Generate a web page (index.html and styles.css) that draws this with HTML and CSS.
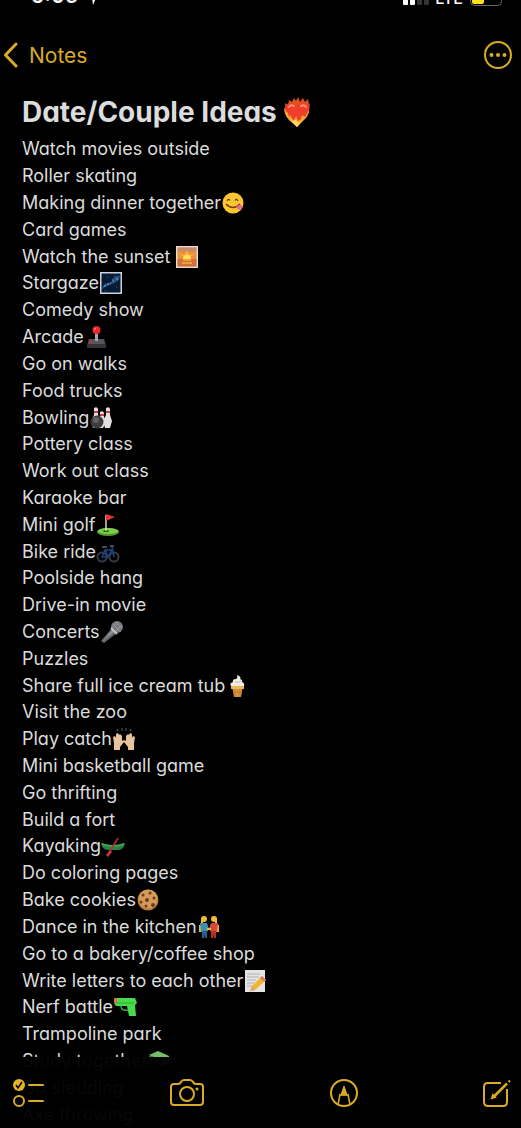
FILE: index.html
```
<!DOCTYPE html>
<html lang="en">
<head>
  <meta charset="UTF-8" />
  <meta name="viewport" content="width=device-width, initial-scale=1.0" />
  <title>Date/Couple Ideas</title>
  <link rel="stylesheet" href="styles.css">
</head>
<body>
  <div class="status-bar">
    <span class="status-time">5:06</span>
    <svg class="location" viewBox="0 0 14 14"><path d="M13 0 7 14 6 7 0 6z" fill="#fff"/></svg>
    <svg class="signal" viewBox="0 0 26 16">
      <rect x="0" y="9" width="5" height="7" rx="1" fill="#fff"/>
      <rect x="7" y="6" width="5" height="10" rx="1" fill="#fff"/>
      <rect x="14" y="3" width="5" height="13" rx="1" fill="#333"/>
      <rect x="21" y="0" width="5" height="16" rx="1" fill="#333"/>
    </svg>
    <span class="status-net">LTE</span>
    <svg class="battery" viewBox="0 0 32 16">
      <rect x="0.5" y="0.5" width="31" height="15" rx="4" fill="none" stroke="#666"/>
      <rect x="2" y="2" width="12" height="12" rx="2" fill="#ffe018"/>
    </svg>
  </div>

  <header class="nav">
    <a href="#" class="back">
      <svg viewBox="0 0 16 26"><path d="M13 2 2.5 13 13 24" fill="none" stroke="#d9ab27" stroke-width="3" stroke-linecap="round" stroke-linejoin="round"/></svg>
      Notes
    </a>
    <button class="icon-btn" aria-label="More">
      <svg viewBox="0 0 28 28"><circle cx="14" cy="14" r="13" fill="none" stroke="#d9ab27" stroke-width="2"/><g fill="#d9ab27"><circle cx="7.5" cy="14" r="2"/><circle cx="14" cy="14" r="2"/><circle cx="20.5" cy="14" r="2"/></g></svg>
    </button>
  </header>

  <main class="note">
    <h1>Date/Couple Ideas<svg class="heart" viewBox="0 0 28 30" role="img" aria-label="heart on fire">
      <path d="M3 13 2 6 5 8 6 3 9 5 11 1 13 4 15 0 17 5 20 1 22 5 25 2 26 8 27 6 26 15 20 23 14 30 7 23 3 18z" fill="#e0531f"/>
      <path d="M14 28C7 22 1 17 2 11C3 5 11 4 14 10C17 4 26 5 26 11C26 18 20 22 14 28z" fill="#f03e2a"/>
      <path d="M6 10Q8 7 11 9M18 9Q21 7 23 10" stroke="#ff9479" stroke-width="2" fill="none" stroke-linecap="round"/>
      <path d="M1 10Q2 14 5 16L6 20 8 18Q8 22 11 23L13 19 15 24 18 22 19 18 22 20 26 13Q26 19 20 24L14 30 6 23Q1 18 1 10z" fill="#f9a92f"/>
      <path d="M7 22 10 24 13 23 15 26 18 24 14 30z" fill="#ffdc62"/>
    </svg></h1>
    <ul class="ideas">
      <li>Watch movies outside</li>
      <li>Roller skating</li>
      <li>Making dinner together<svg class="emoji" viewBox="0 0 24 24" role="img" aria-label="yummy face">
        <circle cx="12" cy="12" r="10.5" fill="#fcc631"/><path d="M6 10Q7.5 7 9 9.5M14 9.5Q15.500 7 17 10" fill="none" stroke="#664012" stroke-width="1.2"/><path d="M5 13Q12 20 19 13" fill="none" stroke="#713712" stroke-width="1.5"/><path d="M15 16Q19 12 21 15Q22 19 18 19z" fill="#ed668b"/></svg></li>
      <li>Card games</li>
      <li>Watch the sunset <svg class="emoji" viewBox="0 0 24 24" role="img" aria-label="sunset">
        <path d="M1 1h22v22H1z" fill="#e4ddd8"/><path d="M2.5 2.5h19v19h-19z" fill="#ed9038"/><path d="M2.5 2.5h19v4h-19z" fill="#cb8c6d"/><path d="M12 14 3 8 9 10 12 6 15 10 21 8z" fill="#f9b43e"/><path d="M8 14Q8 10 12 10T16 14z" fill="#ffe35b"/><path d="M2.5 14h19v7.5h-19z" fill="#d0703a"/><path d="M8 15h8M7 18h10" stroke="#f8af41" stroke-width="1.5"/></svg></li>
      <li>Stargaze<svg class="emoji" viewBox="0 0 24 24" role="img" aria-label="milky way">
        <path d="M1 1h22v22H1z" fill="#cbd3dc"/><path d="M2.5 2.5h19v19h-19z" fill="#071b37"/><path d="M3 17Q5 12 9 12T14 8T21 5L20 9Q15 13 11 14T3 18z" fill="#23507f"/><path d="M5 15h2M8 13h2M11 12h1M14 10h1M17 8h2M13 9h1" stroke="#7aa8d0"/><path d="M8 6h1M17 16h1M6 20h1M15 4h1" stroke="#3d6795"/></svg></li>
      <li>Comedy show</li>
      <li>Arcade<svg class="emoji" viewBox="0 0 24 24" role="img" aria-label="joystick">
        <path d="M5 14h15l2 6v3H3v-3z" fill="#33343a"/><path d="M5 14h15l1 5H4z" fill="#55565c"/><path d="M11 7h3v9h-3z" fill="#a1a1a5"/><circle cx="12.5" cy="5" r="4" fill="#e6282f"/><circle cx="11" cy="4" r="1" fill="#ff8080"/><ellipse cx="7" cy="17" rx="2" ry="1" fill="#d02630"/></svg></li>
      <li>Go on walks</li>
      <li>Food trucks</li>
      <li>Bowling<svg class="emoji" viewBox="0 0 24 24" role="img" aria-label="bowling">
        <g fill="#e2dfde"><path d="M5 2Q8 0 9 3V9L11 15 9 22H4L2 15 5 9z"/><path d="M11 6Q14 4 15 7V11L17 16 14 22H10L9 16 11 11z"/><path d="M17 2Q20 0 21 3V9L23 15 21 22H16L14 15 17 9z"/></g><path d="M5 6h4M11 9h4M17 6h4" stroke="#c53d45" stroke-width="2"/><circle cx="8" cy="16" r="6.5" fill="#3c3c3e"/><circle cx="7" cy="14" r="3" fill="#626264"/></svg></li>
      <li>Pottery class</li>
      <li>Work out class</li>
      <li>Karaoke bar</li>
      <li>Mini golf<svg class="emoji" viewBox="0 0 24 24" role="img" aria-label="golf flag">
        <ellipse cx="12" cy="19" rx="11" ry="4" fill="#4f9928"/><ellipse cx="12" cy="18" rx="10.5" ry="3" fill="#7dcc48"/><ellipse cx="10" cy="18" rx="3" ry="1" fill="#274f18"/><path d="M10 2v16" stroke="#d7d7c8" stroke-width="1.5"/><path d="M10 1 19 4 10 8z" fill="#e6352f"/></svg></li>
      <li>Bike ride<svg class="emoji" viewBox="0 0 24 24" role="img" aria-label="bicycle">
        <g fill="none" stroke="#343b44" stroke-width="2"><circle cx="6" cy="17" r="4.5"/><circle cx="18" cy="17" r="4.5"/></g><path d="M6 17 9 10H16L12 17H6M9 9 12 17M16 7 18 17" fill="none" stroke="#1c4584" stroke-width="1.5"/><path d="M6 7h5M14 6h4" stroke="#4a4a50" stroke-width="2"/></svg></li>
      <li>Poolside hang</li>
      <li>Drive-in movie</li>
      <li>Concerts<svg class="emoji" viewBox="0 0 24 24" role="img" aria-label="microphone">
        <path d="M12 8 17 13 4 23 1 21z" fill="#65666a"/><path d="M12 10 14 12 3 21z" fill="#929397"/><circle cx="17" cy="7" r="6" fill="#77787b"/><path d="M13 4 20 11M15 2 22 8M12 8 18 2M15 12 22 5" stroke="#98989a"/><path d="M11 8 17 14" stroke="#c3c3c5" stroke-width="2"/></svg></li>
      <li>Puzzles</li>
      <li>Share full ice cream tub<svg class="emoji" viewBox="0 0 24 24" role="img" aria-label="soft ice cream">
        <path d="M7 12h11l-2 11H9z" fill="#d7963e"/><path d="M6 11h13v4H6z" fill="#edb65d"/><path d="M10 15v8M15 15v8M8 18h9" stroke="#bd7c32"/><path d="M12 1Q17 3 15 5Q18 6 17 8Q20 9 19 12H6Q4 9 8 8Q7 5 11 5Q13 4 12 1z" fill="#f4ece2"/><path d="M10 8Q14 9 16 7" stroke="#c9b8a8" fill="none"/></svg></li>
      <li>Visit the zoo</li>
      <li>Play catch<svg class="emoji" viewBox="0 0 24 24" role="img" aria-label="raising hands">
        <g fill="#e9c39b"><path d="M2 23V16L1 10 3 9 4 11V7L6 6 7 8 8 7 10 9V14L12 13 12 15 8 20V23z"/><path d="M22 23V16L23 10 21 9 20 11V7L18 6 17 8 16 7 14 9V14L12 13 12 15 16 20V23z"/></g><path d="M6 4 5 2M10 4V1M14 4V1M18 4 19 2" stroke="#56697a"/></svg></li>
      <li>Mini basketball game</li>
      <li>Go thrifting</li>
      <li>Build a fort</li>
      <li>Kayaking<svg class="emoji" viewBox="0 0 24 24" role="img" aria-label="canoe">
        <path d="M0 9Q12 13 24 9Q23 16 17 16H7Q1 16 0 9z" fill="#278245"/><path d="M1 10Q12 14 23 10" fill="none" stroke="#4aa95f" stroke-width="1.5"/><path d="M17 4 8 19" stroke="#b62f34" stroke-width="1.5"/><path d="M9 16 5 21 7 23 11 18z" fill="#cf3339"/></svg></li>
      <li>Do coloring pages</li>
      <li>Bake cookies<svg class="emoji" viewBox="0 0 24 24" role="img" aria-label="cookie">
        <circle cx="12" cy="12" r="10.5" fill="#b87b3d"/><circle cx="12" cy="11" r="9.5" fill="#d49a59"/><g fill="#6a3d1d"><circle cx="7" cy="7" r="1.5"/><circle cx="14" cy="5" r="1.5"/><circle cx="18" cy="10" r="1.5"/><circle cx="11" cy="12" r="2"/><circle cx="5" cy="14" r="1.5"/><circle cx="10" cy="18" r="1.5"/><circle cx="17" cy="17" r="2"/></g></svg></li>
      <li>Dance in the kitchen<svg class="emoji" viewBox="0 0 24 24" role="img" aria-label="two women holding hands">
        <g fill="#eebc35"><circle cx="7" cy="4" r="3"/><circle cx="17" cy="4" r="3"/><path d="M4 3h2v5H4zM18 3h2v5h-2z"/><path d="M2 10h2v7H2zM20 10h2v7h-2z"/></g><path d="M3 8H10L12 14 10 17H4z" fill="#3c8fae"/><path d="M14 8H21L20 17H14L12 14z" fill="#d9463a"/><path d="M5 16h5v7H8l-1-4v4H5z" fill="#27608f"/><path d="M14 16h5v7h-2v-4l-1 4h-2z" fill="#b8322c"/><path d="M10 14h4" stroke="#eebc35" stroke-width="2"/></svg></li>
      <li>Go to a bakery/coffee shop</li>
      <li>Write letters to each other<svg class="emoji" viewBox="0 0 24 24" role="img" aria-label="memo">
        <path d="M2 1h20v22H2z" fill="#e4e4e2"/><path d="M4 5h13M4 8h12M4 11h9M4 14h7M4 17h5" stroke="#b0b2b5"/><path d="M19 7 23 11 12 21 7 22 9 17z" fill="#f2b52d"/><path d="M19 7 23 11 21 13 17 9z" fill="#e37776"/><path d="M9 17 12 21 7 22z" fill="#d4a878"/></svg></li>
      <li>Nerf battle<svg class="emoji" viewBox="0 0 24 24" role="img" aria-label="water gun">
        <path d="M2 3H22L24 8 22 10 23 21H16L14 11H3L1 8z" fill="#48da4b"/><path d="M3 8h18" stroke="#2aa936"/><path d="M8 11Q8 16 15 15" fill="none" stroke="#35aa3c" stroke-width="1.5"/><path d="M1 3h3v5H1z" fill="#e36d3a"/></svg></li>
      <li>Trampoline park</li>
      <li>Study together<svg class="emoji" viewBox="0 0 24 24" role="img" aria-label="green book">
        <path d="M1 6 10 2 21 7 14 12z" fill="#75bd68"/><path d="M1 6 14 12V18L1 11z" fill="#3c8240"/><path d="M14 12 21 7V13L14 18z" fill="#ddd"/></svg></li>
      <li>Go sledding</li>
      <li>Axe throwing</li>
    </ul>
  </main>

  <footer class="toolbar">
    <button class="icon-btn" aria-label="Checklist">
      <svg class="wide" viewBox="0 0 32 28"><circle cx="6" cy="6" r="6" fill="#e5b528"/><path d="M3 6 5 9 9 3" fill="none" stroke="#000" stroke-width="1.5"/><circle cx="6" cy="22" r="5" fill="none" stroke="#d9ab27" stroke-width="2"/><path d="M16 6H30M16 22H30" stroke="#d9ab27" stroke-width="2" stroke-linecap="round"/></svg>
    </button>
    <button class="icon-btn" aria-label="Camera">
      <svg class="camera" viewBox="0 0 34 28"><g fill="none" stroke="#d9ab27" stroke-width="2"><path d="M4 5H8Q10 5 11 3Q12 1 14 1H20Q22 1 23 3Q24 5 26 5H30Q33 5 33 8V23Q33 26 30 26H4Q1 26 1 23V8Q1 5 4 5z"/><circle cx="17" cy="15" r="7"/></g><circle cx="27" cy="10" r="1.5" fill="#d9ab27"/></svg>
    </button>
    <button class="icon-btn" aria-label="Markup">
      <svg viewBox="0 0 28 28"><circle cx="14" cy="14" r="13" fill="none" stroke="#d9ab27" stroke-width="2"/><path d="M14 7 17 16H11z" fill="#d9ab27" stroke="#d9ab27"/><path d="M10 15 8 26M18 15 20 26M10 16H18" stroke="#d9ab27" stroke-width="1.5"/></svg>
    </button>
    <button class="icon-btn" aria-label="New note">
      <svg viewBox="0 0 28 28"><path d="M18 4H5Q1 4 1 8V23Q1 27 5 27H20Q24 27 24 23V10" fill="none" stroke="#d9ab27" stroke-width="2"/><path d="M11 17.5 24 4.5" stroke="#d9ab27" stroke-width="2.5"/><path d="M9 19 10 16 12 18zM25.5 3 27 1.5" fill="#d9ab27" stroke="#d9ab27" stroke-width="2"/></svg>
    </button>
  </footer>
</body>
</html>
```

FILE: styles.css
```
* {
  box-sizing: border-box;
}

body {
  background-color: #000;
  color: #dcdcdc;
  font-family: Inter, 'Liberation Sans', sans-serif;
  font-feature-settings: 'cv11';
  margin: 0;
  height: 100vh;
  display: flex;
  flex-direction: column;
  overflow: hidden;
}

.status-bar {
  display: flex;
  align-items: flex-end;
  height: 6px;
  padding: 0 19px 0 31px;
  overflow: hidden;
  color: #fff;
  flex-shrink: 0;
}

.status-time {
  font-size: 21px;
  font-weight: 600;
  line-height: 20px;
}

.status-net {
  font-size: 16px;
  font-weight: 500;
  line-height: 16px;
  margin: 0 7px 0 6px;
}

.location {
  width: 14px;
  height: 14px;
  margin: 0 auto 1px 8px;
}

.signal {
  width: 26px;
  height: 16px;
  margin-bottom: 1px;
}

.battery {
  width: 32px;
  height: 16px;
}

.nav {
  display: flex;
  align-items: center;
  justify-content: space-between;
  height: 86px;
  padding: 12px 9px 0 3px;
  flex-shrink: 0;
}

.back {
  display: flex;
  align-items: center;
  gap: 10px;
  color: #d9ab27;
  font-size: 21px;
  text-decoration: none;
}

.back svg {
  width: 16px;
  height: 26px;
}

.icon-btn {
  background: none;
  border: 0;
  padding: 0;
  display: flex;
}

.icon-btn svg {
  width: 28px;
  height: 28px;
}

.icon-btn .wide {
  width: 32px;
}

.icon-btn .camera {
  width: 34px;
}

.note {
  flex: 1;
  min-height: 0;
  display: flex;
  flex-direction: column;
  padding: 0 22px;
}

h1 {
  display: flex;
  align-items: center;
  gap: 6px;
  margin: 0 0 4px;
  height: 40px;
  font-size: 28px;
  font-weight: 700;
  flex-shrink: 0;
}

.heart {
  width: 28px;
  height: 30px;
}

.ideas {
  flex: 1;
  min-height: 0;
  display: grid;
  grid-auto-rows: 1fr;
  list-style: none;
  margin: 0;
  padding: 0;
  font-size: 18px;
  line-height: 26px;
}

.ideas li {
  display: flex;
  align-items: center;
  white-space: pre;
}

.emoji {
  width: 24px;
  height: 24px;
}

.toolbar {
  position: fixed;
  left: 0;
  right: 0;
  bottom: 0;
  height: 71px;
  padding: 0 10px 0 13px;
  display: flex;
  align-items: center;
  justify-content: space-between;
  background-color: rgba(0, 0, 0, 0.97);
}
```
